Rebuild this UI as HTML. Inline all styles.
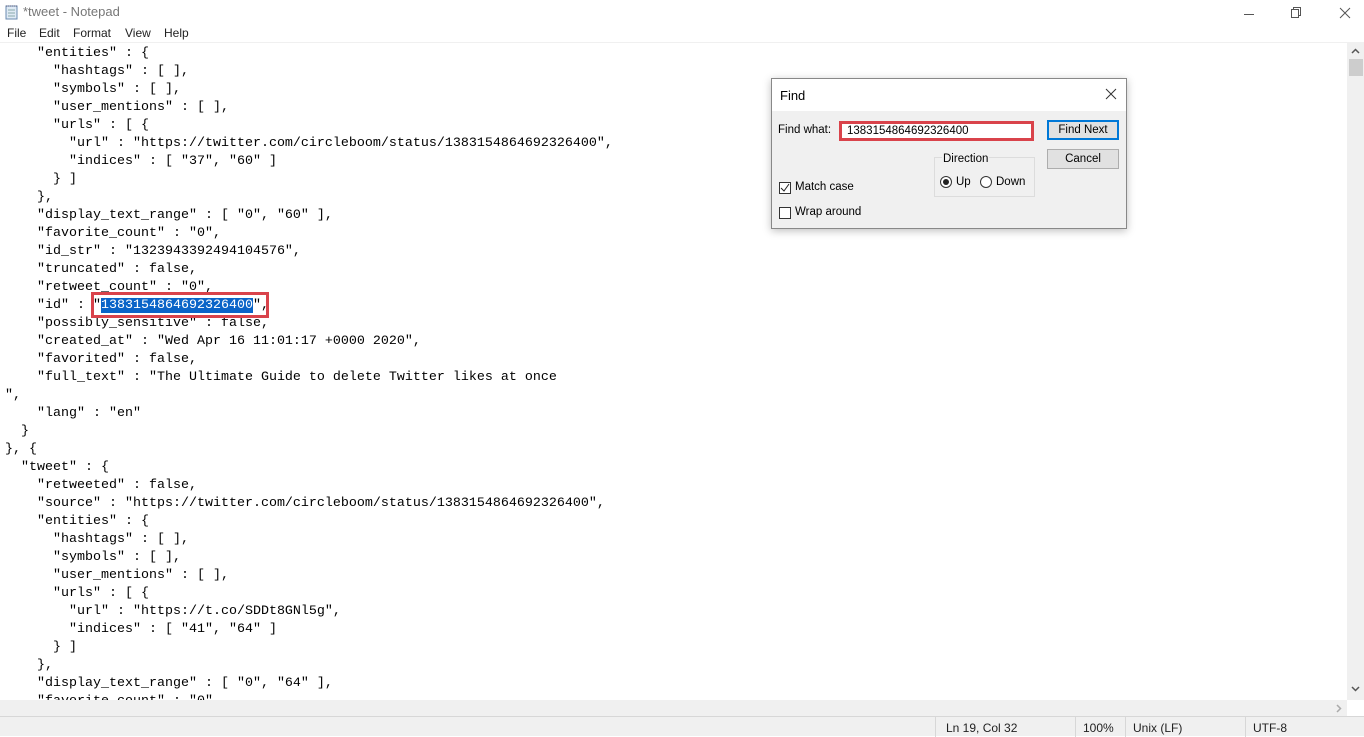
<!DOCTYPE html>
<html><head><meta charset="utf-8"><style>
*{margin:0;padding:0;box-sizing:border-box}
body{width:1364px;height:736px;overflow:hidden;background:#fff;font-family:"Liberation Sans",sans-serif;position:relative}
.title{position:absolute;left:0;top:0;width:1364px;height:24px;font-size:13px;color:#777}
.menu{position:absolute;left:0;top:24px;height:18px;font-size:12px;color:#222}
.menu span{position:absolute;top:2px}
#ed{position:absolute;left:0;top:42px;width:1347px;height:658px;overflow:hidden;border-top:1px solid #f0f0f0}
pre{position:absolute;left:5px;top:2px;font-family:"Liberation Mono",monospace;font-size:13.33px;line-height:18px;color:#000}
.sel{background:#0a64c8;color:#fff}
.vs{position:absolute;left:1347px;top:42px;width:17px;height:658px;background:#f0f0f0}
.hs{position:absolute;left:0;top:700px;width:1347px;height:16px;background:#f0f0f0}
.sb{position:absolute;left:0;top:716px;width:1364px;height:20px;background:#f0f0f0;border-top:1px solid #d7d7d7;font-size:12px;color:#222}
.sb span{position:absolute;top:4px}
.sb i{position:absolute;top:0;width:1px;height:20px;background:#d7d7d7}
.dlg{position:absolute;left:771px;top:78px;width:356px;height:151px;background:#f0f0f0;border:1px solid #888;box-shadow:0 2px 8px rgba(0,0,0,.25);font-size:11.5px;color:#000}
.dt{position:absolute;left:0;top:0;width:354px;height:32px;background:#fff;font-size:13px}
.btn{position:absolute;width:72px;height:20px;background:#e1e1e1;border:1px solid #adadad;text-align:center;line-height:18px}
.cb{position:absolute;width:12px;height:12px;border:1px solid #333;background:#fff}
.rb{position:absolute;width:12px;height:12px;border:1px solid #333;border-radius:50%;background:#fff}
</style></head><body>
<div class="title">
<svg style="position:absolute;left:4px;top:4px" width="16" height="16"><rect x="2" y="2" width="11" height="13" fill="#dfeaf5" stroke="#6a8bb0"/><path d="M4 6h7M4 9h7M4 12h7" stroke="#8aa"/><path d="M2 2h11" stroke="#557" stroke-dasharray="1 1"/></svg>
<span style="position:absolute;left:23px;top:4px">*tweet - Notepad</span>
<svg style="position:absolute;left:1244px;top:4px" width="110" height="16"><path d="M0 10.5h10" stroke="#555"/><rect x="47.5" y="5.5" width="7" height="8" fill="none" stroke="#555"/><path d="M49.5 5.5v-2h7v8h-2" fill="none" stroke="#555"/><path d="M96 4l10 10M106 4l-10 10" stroke="#555"/></svg>
</div>
<div class="menu"><span style="left:7px">File</span><span style="left:39px">Edit</span><span style="left:73px">Format</span><span style="left:125px">View</span><span style="left:164px">Help</span></div>
<div id="ed"><pre>    "entities" : {
      "hashtags" : [ ],
      "symbols" : [ ],
      "user_mentions" : [ ],
      "urls" : [ {
        "url" : "https://twitter.com/circleboom/status/1383154864692326400",
        "indices" : [ "37", "60" ]
      } ]
    },
    "display_text_range" : [ "0", "60" ],
    "favorite_count" : "0",
    "id_str" : "1323943392494104576",
    "truncated" : false,
    "retweet_count" : "0",
    "id" : "<span class="sel">1383154864692326400</span>",
    "possibly_sensitive" : false,
    "created_at" : "Wed Apr 16 11:01:17 +0000 2020",
    "favorited" : false,
    "full_text" : "The Ultimate Guide to delete Twitter likes at once
",
    "lang" : "en"
  }
}, {
  "tweet" : {
    "retweeted" : false,
    "source" : "https://twitter.com/circleboom/status/1383154864692326400",
    "entities" : {
      "hashtags" : [ ],
      "symbols" : [ ],
      "user_mentions" : [ ],
      "urls" : [ {
        "url" : "https://t.co/SDDt8GNl5g",
        "indices" : [ "41", "64" ]
      } ]
    },
    "display_text_range" : [ "0", "64" ],
    "favorite_count" : "0",</pre>
<div style="position:absolute;left:91px;top:249px;width:178px;height:26px;border:3px solid #d9434b"></div>
</div>
<div class="vs"><svg style="position:absolute;left:4px;top:6px" width="9" height="6"><path d="M1 5l3.5-3.5L8 5" stroke="#555" stroke-width="1.5" fill="none"/></svg><div style="position:absolute;left:2px;top:17px;width:14px;height:17px;background:#cdcdcd"></div><svg style="position:absolute;left:4px;top:644px" width="9" height="6"><path d="M1 1l3.5 3.5L8 1" stroke="#555" stroke-width="1.5" fill="none"/></svg></div>
<div class="hs"><svg style="position:absolute;left:1336px;top:4px" width="6" height="9"><path d="M1 1l3.5 3.5L1 8" stroke="#aaa" stroke-width="1.5" fill="none"/></svg></div>
<div class="sb"><i style="left:935px"></i><span style="left:946px">Ln 19, Col 32</span><i style="left:1075px"></i><span style="left:1083px">100%</span><i style="left:1125px"></i><span style="left:1133px">Unix (LF)</span><i style="left:1245px"></i><span style="left:1253px">UTF-8</span></div>
<div class="dlg">
<div class="dt"><span style="position:absolute;left:8px;top:9px">Find</span><svg style="position:absolute;left:333px;top:9px" width="12" height="12"><path d="M1 1l10 10M11 1L1 11" stroke="#333"/></svg></div>
<span style="position:absolute;left:6px;top:45px">Find what:</span>
<div style="position:absolute;left:67px;top:42px;width:195px;height:20px;background:#fff;border:3px solid #d9434b;padding-left:5px;line-height:14px">1383154864692326400</div>
<div class="btn" style="left:275px;top:41px;border:2px solid #0078d7;line-height:16px">Find Next</div>
<div class="btn" style="left:275px;top:70px">Cancel</div>
<div style="position:absolute;left:162px;top:78px;width:101px;height:40px;border:1px solid #dcdcdc"></div>
<span style="position:absolute;left:170px;top:74px;background:#f0f0f0;padding:0 1px">Direction</span>
<div class="rb" style="left:168px;top:97px"><div style="position:absolute;left:2px;top:2px;width:6px;height:6px;border-radius:50%;background:#222"></div></div>
<span style="position:absolute;left:184px;top:97px">Up</span>
<div class="rb" style="left:208px;top:97px"></div>
<span style="position:absolute;left:224px;top:97px">Down</span>
<div class="cb" style="left:7px;top:103px"><svg width="10" height="10" style="position:absolute;left:0;top:0"><path d="M1 5l3 3 5-7" stroke="#222" fill="none"/></svg></div>
<span style="position:absolute;left:23px;top:102px">Match case</span>
<div class="cb" style="left:7px;top:128px"></div>
<span style="position:absolute;left:23px;top:127px">Wrap around</span>
</div>
</body></html>
